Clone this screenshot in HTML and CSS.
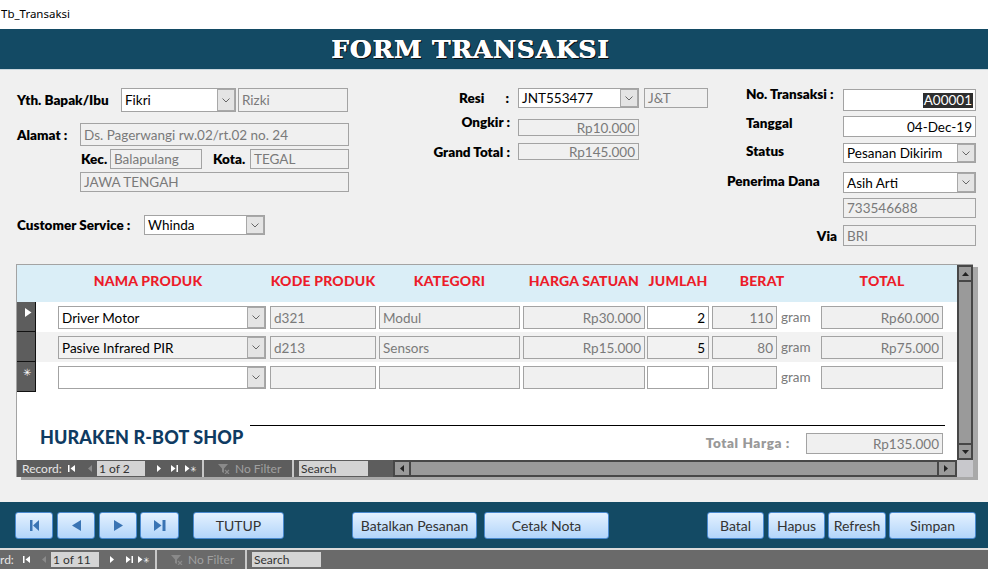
FILE: index.html
```html
<!DOCTYPE html>
<html>
<head>
<meta charset="utf-8">
<title>Tb_Transaksi</title>
<link rel="stylesheet" href="styles.css">
</head>
<body>
<div class="wtitle">Tb_Transaksi</div>
<div class="header"><h1 class="title">FORM TRANSAKSI</h1></div>

<div class="main">
  <div class="top">
    <div class="blk left">
      <div class="row h24">
        <span class="lbl lw-yth">Yth. Bapak/Ibu</span>
        <div class="f wh w-fikri">Fikri<span class="dd"><svg width="8" height="5" viewBox="0 0 8 5"><polyline points="0.5,0.5 4,4 7.5,0.5" fill="none" stroke="#666" stroke-width="1"/></svg></span></div>
        <div class="f w-rizki">Rizki</div>
      </div>
      <div class="row h23 mt11">
        <span class="lbl lw-alamat">Alamat :</span>
        <div class="f w-addr">Ds. Pagerwangi rw.02/rt.02 no. 24</div>
      </div>
      <div class="row h20 mt3 in-kec">
        <span class="lbl lw-kec">Kec.</span>
        <div class="f w-kec">Balapulang</div>
        <span class="lbl lw-kota">Kota.</span>
        <div class="f w-kota">TEGAL</div>
      </div>
      <div class="row h20 mt3 in-prov">
        <div class="f w-addr">JAWA TENGAH</div>
      </div>
      <div class="row h20 mt23">
        <span class="lbl lw-cs">Customer Service :</span>
        <div class="f wh w-cs">Whinda<span class="dd"><svg width="8" height="5" viewBox="0 0 8 5"><polyline points="0.5,0.5 4,4 7.5,0.5" fill="none" stroke="#666" stroke-width="1"/></svg></span></div>
      </div>
    </div>

    <div class="blk mid">
      <div class="row h20">
        <span class="lbl mlbl resi"><span>Resi</span><span>:</span></span>
        <div class="f wh w-mid">JNT553477<span class="dd"><svg width="8" height="5" viewBox="0 0 8 5"><polyline points="0.5,0.5 4,4 7.5,0.5" fill="none" stroke="#666" stroke-width="1"/></svg></span></div>
        <div class="f w-kurir">J&amp;T</div>
      </div>
      <div class="row h17 mt11">
        <span class="lbl mlbl up12">Ongkir :</span>
        <div class="f ra w-mid">Rp10.000</div>
      </div>
      <div class="row h17 mt7">
        <span class="lbl mlbl">Grand Total :</span>
        <div class="f ra w-mid">Rp145.000</div>
      </div>
    </div>

    <div class="blk right">
      <div class="row h22 mt1">
        <span class="lbl rlbl up12">No. Transaksi :</span>
        <div class="f wh ra w-right"><span class="sel">A00001</span></div>
      </div>
      <div class="row h21 mt5">
        <span class="lbl rlbl up7">Tanggal</span>
        <div class="f wh ra w-right">04-Dec-19</div>
      </div>
      <div class="row h20 mt6">
        <span class="lbl rlbl up4">Status</span>
        <div class="f wh w-right">Pesanan Dikirim<span class="dd"><svg width="8" height="5" viewBox="0 0 8 5"><polyline points="0.5,0.5 4,4 7.5,0.5" fill="none" stroke="#666" stroke-width="1"/></svg></span></div>
      </div>
      <div class="row h21 mt9">
        <span class="lbl rlbl flush up3">Penerima Dana</span>
        <div class="f wh w-right">Asih Arti<span class="dd"><svg width="8" height="5" viewBox="0 0 8 5"><polyline points="0.5,0.5 4,4 7.5,0.5" fill="none" stroke="#666" stroke-width="1"/></svg></span></div>
      </div>
      <div class="row h20 mt5">
        <span class="lbl rlbl"></span>
        <div class="f w-right">733546688</div>
      </div>
      <div class="row h21 mt7">
        <span class="lbl rlbl via">Via</span>
        <div class="f w-right">BRI</div>
      </div>
    </div>
  </div>

  <div class="sub">
    <div class="sheet">
      <div class="shead">
        <span class="hc c-nama hn">NAMA PRODUK</span>
        <span class="hc c-kode">KODE PRODUK</span>
        <span class="hc c-kat">KATEGORI</span>
        <span class="hc c-harga">HARGA SATUAN</span>
        <span class="hc c-jml">JUMLAH</span>
        <span class="hc c-berat hb">BERAT</span>
        <span class="hc c-tot">TOTAL</span>
      </div>

      <div class="srow">
        <span class="rsel"><svg width="7" height="9" viewBox="0 0 7 9"><path d="M0 0 L6.5 4.5 L0 9Z" fill="#fff"/></svg></span>
        <div class="f wh c-nama">Driver Motor<span class="dd"><svg width="8" height="5" viewBox="0 0 8 5"><polyline points="0.5,0.5 4,4 7.5,0.5" fill="none" stroke="#666" stroke-width="1"/></svg></span></div>
        <div class="f c-kode">d321</div>
        <div class="f c-kat">Modul</div>
        <div class="f ra c-harga">Rp30.000</div>
        <div class="f wh ra c-jml">2</div>
        <div class="f ra c-berat">110</div>
        <span class="gram">gram</span>
        <div class="f ra c-tot">Rp60.000</div>
      </div>
      <div class="srow alt">
        <span class="rsel"></span>
        <div class="f wh c-nama">Pasive Infrared PIR<span class="dd"><svg width="8" height="5" viewBox="0 0 8 5"><polyline points="0.5,0.5 4,4 7.5,0.5" fill="none" stroke="#666" stroke-width="1"/></svg></span></div>
        <div class="f c-kode">d213</div>
        <div class="f c-kat">Sensors</div>
        <div class="f ra c-harga">Rp15.000</div>
        <div class="f wh ra c-jml">5</div>
        <div class="f ra c-berat">80</div>
        <span class="gram">gram</span>
        <div class="f ra c-tot">Rp75.000</div>
      </div>
      <div class="srow">
        <span class="rsel star">&#x2733;</span>
        <div class="f wh c-nama"><span class="dd"><svg width="8" height="5" viewBox="0 0 8 5"><polyline points="0.5,0.5 4,4 7.5,0.5" fill="none" stroke="#666" stroke-width="1"/></svg></span></div>
        <div class="f c-kode"></div>
        <div class="f c-kat"></div>
        <div class="f c-harga"></div>
        <div class="f wh c-jml"></div>
        <div class="f c-berat"></div>
        <span class="gram">gram</span>
        <div class="f c-tot"></div>
      </div>

      <div class="sfoot">
        <div class="fline"></div>
        <div class="frow">
          <span class="shop">HURAKEN R-BOT SHOP</span>
          <span class="tlbl">Total Harga :</span>
          <div class="f ra c-total">Rp135.000</div>
        </div>
      </div>
    </div>

    <div class="vscroll">
      <span class="sbtn up"><svg width="7" height="4" viewBox="0 0 7 4"><path d="M0 4 L3.5 0 L7 4Z" fill="#222"/></svg></span>
      <span class="sbtn down"><svg width="7" height="4" viewBox="0 0 7 4"><path d="M0 0 L3.5 4 L7 0Z" fill="#222"/></svg></span>
    </div>

    <div class="snav">
      <div class="recnav sub-nav">
        <span class="rec-lbl">Record:</span>
        <svg class="ni" width="7" height="7" viewBox="0 0 7 7"><rect x="0" y="0" width="1.5" height="7" fill="#fff"/><path d="M7 0 L2.5 3.5 L7 7Z" fill="#fff"/></svg>
        <svg class="ni prev" width="6" height="7" viewBox="0 0 6 7"><path d="M5 0 L1 3.5 L5 7Z" fill="#8a8a8a"/></svg>
        <span class="recbox">1 of 2</span>
        <svg class="ni next" width="6" height="7" viewBox="0 0 6 7"><path d="M1 0 L5 3.5 L1 7Z" fill="#fff"/></svg>
        <svg class="ni last" width="7" height="7" viewBox="0 0 7 7"><path d="M0 0 L4.5 3.5 L0 7Z" fill="#fff"/><rect x="5.5" y="0" width="1.5" height="7" fill="#fff"/></svg>
        <span class="ni new"><svg width="5" height="7" viewBox="0 0 5 7"><path d="M0 0 L4.5 3.5 L0 7Z" fill="#fff"/></svg><span class="ast">&#x2733;</span></span>
        <span class="nsep"></span>
        <span class="filt"><svg width="12" height="10" viewBox="0 0 12 10"><path d="M0 0 H10 L6 4.5 V9 L4 8 V4.5Z" fill="#8a8a8a"/><path d="M7 6 L11 10 M11 6 L7 10" stroke="#8a8a8a" stroke-width="1.2"/></svg><span class="ftxt">No Filter</span></span>
        <span class="nsep"></span>
        <span class="srch">Search</span>
      </div>
      <div class="hscroll">
        <span class="hbtn"><svg width="4" height="7" viewBox="0 0 4 7"><path d="M4 0 L0 3.5 L4 7Z" fill="#222"/></svg></span>
        <span class="hbtn"><svg width="4" height="7" viewBox="0 0 4 7"><path d="M0 0 L4 3.5 L0 7Z" fill="#222"/></svg></span>
      </div>
    </div>
    <div class="corner"></div>
  </div>
</div>

<div class="bbar">
  <button class="btn b-nav"><svg width="9" height="11" viewBox="0 0 9 11"><rect x="0" y="0" width="2.5" height="11" fill="#3a74b4"/><path d="M9 0 L3 5.5 L9 11Z" fill="#3a74b4"/></svg></button>
  <button class="btn b-nav b-g4"><svg width="9" height="11" viewBox="0 0 9 11"><path d="M9 0 L0 5.5 L9 11Z" fill="#3a74b4"/></svg></button>
  <button class="btn b-nav b-g4"><svg width="9" height="11" viewBox="0 0 9 11"><path d="M0 0 L9 5.5 L0 11Z" fill="#3a74b4"/></svg></button>
  <button class="btn b-nav b-last"><svg width="12" height="11" viewBox="0 0 12 11"><path d="M0 0 L7.5 5.5 L0 11Z" fill="#3a74b4"/><rect x="8.5" y="0" width="3" height="11" fill="#3a74b4"/></svg></button>
  <button class="btn b-tutup">TUTUP</button>
  <button class="btn b-batalkan">Batalkan Pesanan</button>
  <button class="btn b-cetak">Cetak Nota</button>
  <button class="btn b-batal">Batal</button>
  <button class="btn b-hapus">Hapus</button>
  <button class="btn b-refresh">Refresh</button>
  <button class="btn b-simpan">Simpan</button>
</div>

<div class="status">
  <div class="recnav main-nav">
    <span class="rec-clip">rd:</span>
    <svg class="ni" width="7" height="7" viewBox="0 0 7 7"><rect x="0" y="0" width="1.5" height="7" fill="#fff"/><path d="M7 0 L2.5 3.5 L7 7Z" fill="#fff"/></svg>
    <svg class="ni prev" width="6" height="7" viewBox="0 0 6 7"><path d="M5 0 L1 3.5 L5 7Z" fill="#8a8a8a"/></svg>
    <span class="recbox">1 of 11</span>
    <svg class="ni next" width="6" height="7" viewBox="0 0 6 7"><path d="M1 0 L5 3.5 L1 7Z" fill="#fff"/></svg>
    <svg class="ni last" width="7" height="7" viewBox="0 0 7 7"><path d="M0 0 L4.5 3.5 L0 7Z" fill="#fff"/><rect x="5.5" y="0" width="1.5" height="7" fill="#fff"/></svg>
    <span class="ni new"><svg width="5" height="7" viewBox="0 0 5 7"><path d="M0 0 L4.5 3.5 L0 7Z" fill="#fff"/></svg><span class="ast">&#x2733;</span></span>
    <span class="nsep"></span>
    <span class="filt"><svg width="12" height="10" viewBox="0 0 12 10"><path d="M0 0 H10 L6 4.5 V9 L4 8 V4.5Z" fill="#8a8a8a"/><path d="M7 6 L11 10 M11 6 L7 10" stroke="#8a8a8a" stroke-width="1.2"/></svg><span class="ftxt">No Filter</span></span>
    <span class="nsep"></span>
    <span class="srch">Search</span>
  </div>
</div>
</body>
</html>
```

FILE: styles.css
```css
* { box-sizing: border-box; }
html, body { margin: 0; padding: 0; }
body {
  width: 988px; height: 569px; overflow: hidden;
  background: #f0f0f0;
  font-family: Lato, "Open Sans", sans-serif;
  font-size: 13px; color: #000;
}

.wtitle {
  height: 29px; background: #fff;
  font-family: "Noto Sans", sans-serif; font-size: 11.5px;
  line-height: 28px; padding-left: 1px;
}
.header {
  height: 41px; background: #134a64;
  border-bottom: 1px solid #c9d7de;
  display: flex; align-items: center; padding-left: 331px;
}
.title {
  margin: 0; font-family: "DejaVu Serif", serif; font-weight: 700;
  font-size: 25px; letter-spacing: 0.8px; color: #fff; line-height: 1;
  text-shadow: 0.6px 0 0 #fff, 1.6px 1.4px 0 #0c0c0c, -0.8px 0 0 #2a2a2a;
}

.main { height: 432px; }
.top { display: flex; height: 194px; padding: 18px 0 0 17px; }
.blk { display: flex; flex-direction: column; flex: none; }
.left { width: 332px; }
.mid { width: 281px; margin-left: 79px; }
.right { width: 249px; margin-left: 18px; }

.row { display: flex; align-items: center; flex: none; }
.h17 { height: 17px; } .h20 { height: 20px; } .h21 { height: 21px; }
.h22 { height: 22px; } .h23 { height: 23px; } .h24 { height: 24px; }
.mt1 { margin-top: 1px; } .mt3 { margin-top: 3px; } .mt5 { margin-top: 5px; }
.mt6 { margin-top: 6px; } .mt7 { margin-top: 7px; } .mt9 { margin-top: 9px; }
.mt11 { margin-top: 11px; } .mt23 { margin-top: 23px; }

.lbl { font-weight: 800; font-size: 13.5px; line-height: 16px; white-space: nowrap; flex: none; }
.up3 { margin-bottom: 3px; } .up4 { margin-bottom: 4px; }
.up7 { margin-bottom: 7px; } .up12 { margin-bottom: 12px; }

.f {
  flex: none; display: flex; align-items: center; height: 100%;
  border: 1px solid #a3a3a3; background: #f0f0f0; color: #7a7a7a;
  padding: 0 3px; white-space: nowrap; overflow: hidden; font-size: 13.5px;
}
.f.wh { background: #fff; color: #000; }
.f.ra { justify-content: flex-end; }
.dd {
  margin-left: auto; margin-right: -3px; width: 18px; height: 100%; flex: none;
  border: 1px solid #a8a8a8; background: #e4e4e4;
  display: flex; align-items: center; justify-content: center;
}

/* left block */
.lw-yth { width: 104px; }
.w-fikri { width: 115px; }
.w-rizki { width: 110px; margin-left: 2px; }
.lw-alamat { width: 63px; }
.w-addr { width: 269px; }
.in-kec { margin-left: 64px; }
.in-prov { margin-left: 63px; }
.lw-kec { width: 29px; }
.w-kec { width: 92px; }
.lw-kota { width: 37px; margin-left: 11px; }
.w-kota { width: 99px; }
.lw-cs { width: 127px; }
.w-cs { width: 121px; }

/* middle block */
.mlbl { width: 90px; text-align: right; padding-right: 8px; }
.resi { display: flex; justify-content: space-between; padding-left: 31px; padding-right: 9px; }
.w-mid { width: 121px; }
.w-kurir { width: 64px; margin-left: 5px; }

/* right block */
.rlbl { width: 116px; padding-left: 19px; }
.rlbl.flush { padding-left: 0; }
.rlbl.via { text-align: right; padding-right: 6px; }
.w-right { width: 133px; }
.sel { background: #2e2e2e; color: #fff; padding: 0 1px; line-height: 15px; margin-right: -1px; }

/* subform */
.sub {
  margin-left: 16px; width: 957px; height: 213px;
  display: grid; grid-template-columns: 940px 16px; grid-template-rows: 195px 17px;
  border-left: 1px solid #a3a3a3; border-top: 1px solid #a3a3a3;
  box-shadow: 5px 3px 0 #a9a9a9;
}
.sheet { background: #fff; overflow: hidden; }
.shead {
  height: 37px; background: #daeef7; display: flex; padding: 9px 0 0 41px;
}
.hc {
  flex: none; text-align: center; color: #ec1c2a; font-weight: 900;
  font-size: 14px; line-height: 14px; white-space: nowrap; letter-spacing: 0.2px;
}
.hn { padding-right: 28px; }
.hb { width: 100px !important; }

.srow { display: flex; height: 30px; }
.srow.alt { background: #f2f2f2; }
.srow.alt .f.wh { background: #f2f2f2; }
.srow .f { height: 23px; margin-top: 4px; }
.rsel {
  flex: none; width: 19px; height: 30px; background: #5d5d5d;
  border-right: 1px solid #111; border-bottom: 1px solid #111;
  padding: 4px 0 0 8px; line-height: 1;
}
.rsel.star { color: #fff; font-size: 10px; padding: 5px 0 0 6px; }
.c-nama { width: 208px; margin-left: 22px; }
.shead .c-nama { margin-left: 0; }
.c-kode { width: 106px; margin-left: 4px; }
.c-kat { width: 141px; margin-left: 3px; }
.c-harga { width: 122px; margin-left: 3px; }
.c-jml { width: 62px; margin-left: 2px; }
.c-berat { width: 65px; margin-left: 3px; }
.c-tot { width: 122px; margin-left: 9px; }
.gram {
  flex: none; width: 31px; margin-left: 4px; color: #7a7a7a; font-size: 13.5px;
  align-self: center;
}
.shead .c-tot { margin-left: 9px; }

.sfoot { height: 68px; }
.fline { margin: 33px 0 0 233px; width: 695px; border-top: 1px solid #000; }
.frow { display: flex; align-items: flex-start; margin-top: 2px; }
.shop {
  margin-left: 23px; color: #0f3b62; font-weight: 900; font-size: 18px;
  line-height: 18px; letter-spacing: 0.1px; white-space: nowrap;
}
.tlbl {
  margin-left: auto; margin-top: 7px; color: #999; font-weight: 800;
  font-size: 13.5px; line-height: 16px; white-space: nowrap; letter-spacing: 0.6px;
}
.c-total { width: 137px; height: 21px; margin: 5px 14px 0 16px; }

.vscroll {
  background: #9a9a9a; border: 2px solid #474747;
  display: flex; flex-direction: column; justify-content: space-between;
}
.sbtn { height: 15px; display: flex; align-items: center; justify-content: center; }
.sbtn.up { border-bottom: 2px solid #474747; }
.sbtn.down { border-top: 2px solid #474747; }

.snav { display: flex; height: 17px; }
.corner { background: #c8c8cc; }

.recnav {
  display: flex; align-items: center; background: #5d5d5d; color: #e6e6e6;
  font-size: 12px; white-space: nowrap; flex: none;
}
.sub-nav { width: 376px; height: 17px; padding-left: 5px; }
.rec-lbl { width: 46px; flex: none; }
.ni { flex: none; display: flex; align-items: center; }
.sub-nav .prev { margin-left: 12px; }
.recbox {
  flex: none; width: 48px; height: 15px; background: #d4d4d4; color: #333;
  padding-left: 2px; line-height: 15px; margin-left: 4px;
}
.sub-nav .next { margin-left: 11px; }
.sub-nav .last { margin-left: 9px; }
.new { margin-left: 7px; width: 12px; }
.ast { font-size: 8px; line-height: 1; margin-left: 0; color: #fff; }
.nsep { flex: none; width: 2px; height: 100%; background: #c8c8c8; margin-left: 5px; }
.filt + .nsep { margin-left: 0; }
.filt { flex: none; width: 88px; display: flex; align-items: center; padding-left: 14px; }
.ftxt { margin-left: 5px; color: #a0a0a0; }
.srch {
  flex: none; width: 69px; height: 15px; background: #d4d4d4; color: #333;
  padding-left: 2px; line-height: 15px; margin-left: 5px;
}

.hscroll {
  flex: none; width: 564px; height: 17px; background: #9a9a9a;
  border: 2px solid #474747; display: flex; justify-content: space-between;
}
.hbtn { width: 16px; display: flex; align-items: center; justify-content: center; }
.hbtn:first-child { border-right: 2px solid #474747; }
.hbtn:last-child { border-left: 2px solid #474747; margin-right: 2px; }

/* bottom bar */
.bbar {
  height: 46px; background: #134a64; display: flex; align-items: center; padding-left: 15px;
}
.btn {
  flex: none; height: 27px; padding: 0;
  border: 1px solid #4a8ad0; border-radius: 3px;
  background: linear-gradient(#e4f1ff, #b2d5fa);
  display: flex; align-items: center; justify-content: center;
  font-family: Lato, "Open Sans", sans-serif; font-size: 14px; color: #333;
}
.b-nav { width: 38px; }
.b-g4 { margin-left: 4px; }
.b-last { width: 39px; margin-left: 3px; }
.b-tutup { width: 91px; margin-left: 14px; }
.b-batalkan { width: 125px; margin-left: 68px; }
.b-cetak { width: 125px; margin-left: 7px; }
.b-batal { width: 57px; margin-left: 98px; }
.b-hapus { width: 57px; margin-left: 4px; }
.b-refresh { width: 58px; margin-left: 3px; }
.b-simpan { width: 87px; margin-left: 3px; }

.status {
  height: 21px; border-top: 2px solid #dcdcdc; background: #6a6a6a;
}
.main-nav { height: 19px; background: #6a6a6a; }
.rec-clip { width: 23px; flex: none; }
.main-nav .prev { margin-left: 11px; }
.main-nav .next { margin-left: 10px; }
.main-nav .last { margin-left: 11px; }
.main-nav .new { margin-left: 5px; }
.main-nav .filt { width: 88px; }
```
